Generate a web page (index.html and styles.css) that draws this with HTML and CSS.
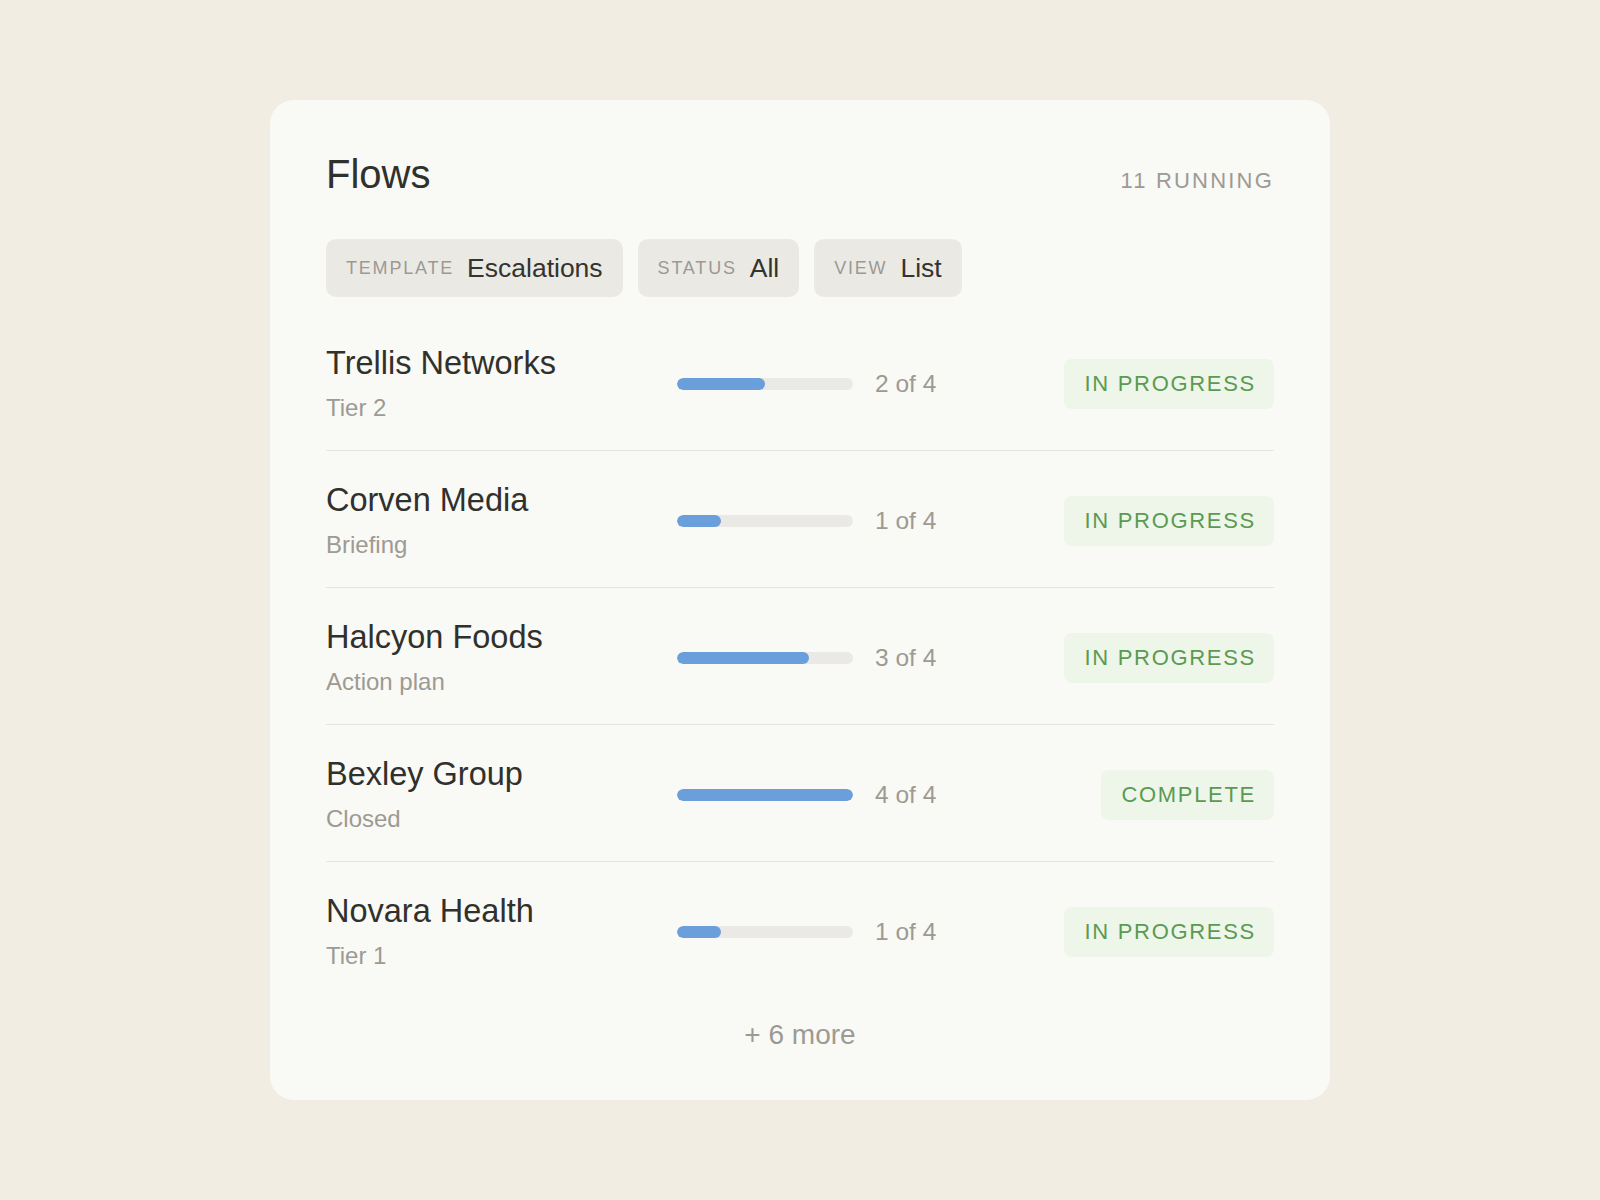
FILE: index.html
```html
<!DOCTYPE html>
<html lang="en">
<head>
<meta charset="utf-8">
<title>Flows</title>
<link rel="stylesheet" href="styles.css">
</head>
<body>
<main class="card">
  <header class="header">
    <h1 class="title">Flows</h1>
    <span class="running">11 RUNNING</span>
  </header>
  <div class="filters">
    <div class="pill"><span class="pill-label">TEMPLATE</span><span class="pill-value">Escalations</span></div>
    <div class="pill"><span class="pill-label">STATUS</span><span class="pill-value">All</span></div>
    <div class="pill"><span class="pill-label">VIEW</span><span class="pill-value">List</span></div>
  </div>
  <ul class="rows">
    <li class="row">
      <div class="info"><div class="name">Trellis Networks</div><div class="sub">Tier 2</div></div>
      <div class="track"><div class="fill" style="width:50%"></div></div>
      <div class="count">2 of 4</div>
      <div class="badge">IN PROGRESS</div>
    </li>
    <li class="row">
      <div class="info"><div class="name">Corven Media</div><div class="sub">Briefing</div></div>
      <div class="track"><div class="fill" style="width:25%"></div></div>
      <div class="count">1 of 4</div>
      <div class="badge">IN PROGRESS</div>
    </li>
    <li class="row">
      <div class="info"><div class="name">Halcyon Foods</div><div class="sub">Action plan</div></div>
      <div class="track"><div class="fill" style="width:75%"></div></div>
      <div class="count">3 of 4</div>
      <div class="badge">IN PROGRESS</div>
    </li>
    <li class="row">
      <div class="info"><div class="name">Bexley Group</div><div class="sub">Closed</div></div>
      <div class="track"><div class="fill" style="width:100%"></div></div>
      <div class="count">4 of 4</div>
      <div class="badge">COMPLETE</div>
    </li>
    <li class="row">
      <div class="info"><div class="name">Novara Health</div><div class="sub">Tier 1</div></div>
      <div class="track"><div class="fill" style="width:25%"></div></div>
      <div class="count">1 of 4</div>
      <div class="badge">IN PROGRESS</div>
    </li>
  </ul>
  <div class="more">+ 6 more</div>
</main>
</body>
</html>
```

FILE: styles.css
```css
* { box-sizing: border-box; }

html, body {
  margin: 0;
  padding: 0;
}

body {
  background: #f1ede2;
  font-family: "Liberation Sans", Arial, sans-serif;
  min-height: 1200px;
  padding-top: 100px;
}

.card {
  width: 1060px;
  height: 1000px;
  margin: 0 auto;
  background: #f9f9f5;
  border-radius: 24px;
  padding: 51px 56px 0;
  display: flex;
  flex-direction: column;
}

.header {
  display: flex;
  justify-content: space-between;
  align-items: baseline;
}

.title {
  margin: 0;
  font-size: 40px;
  line-height: 46px;
  font-weight: 400;
  color: #30302c;
}

.running {
  font-size: 22px;
  letter-spacing: 2.2px;
  color: #9d9a94;
}

.filters {
  display: flex;
  gap: 15px;
  margin-top: 42px;
}

.pill {
  display: flex;
  align-items: center;
  gap: 13px;
  height: 58px;
  padding: 0 20px;
  background: #ebe9e4;
  border-radius: 10px;
}

.pill-label {
  font-size: 18px;
  letter-spacing: 1.8px;
  color: #9c9994;
}

.pill-value {
  font-size: 26.5px;
  line-height: 30px;
  color: #33332f;
}

.rows {
  list-style: none;
  margin: 17px 0 0;
  padding: 0;
}

.row {
  display: flex;
  align-items: center;
  padding: 30px 0 27px;
  border-bottom: 1px solid #e6e4df;
}

.row:last-child {
  border-bottom: none;
}

.info {
  width: 351px;
  flex: none;
}

.name {
  font-size: 32.5px;
  line-height: 38px;
  color: #30302c;
}

.sub {
  margin-top: 11px;
  font-size: 24px;
  line-height: 30px;
  color: #9d9a94;
}

.track {
  width: 176px;
  height: 12px;
  flex: none;
  background: #ebe9e5;
  border-radius: 6px;
  overflow: hidden;
}

.fill {
  height: 100%;
  background: #6b9fdc;
  border-radius: 6px;
}

.count {
  flex: 1;
  margin-left: 22px;
  font-size: 24.5px;
  line-height: 30px;
  color: #9d9a94;
}

.badge {
  height: 50px;
  display: flex;
  align-items: center;
  padding: 0 18px 0 20px;
  background: #edf6e9;
  border-radius: 8px;
  font-size: 22px;
  letter-spacing: 1.7px;
  color: #5b9a52;
}

.more {
  margin-top: 20px;
  text-align: center;
  font-size: 28px;
  line-height: 34px;
  color: #9d9a94;
}
```
